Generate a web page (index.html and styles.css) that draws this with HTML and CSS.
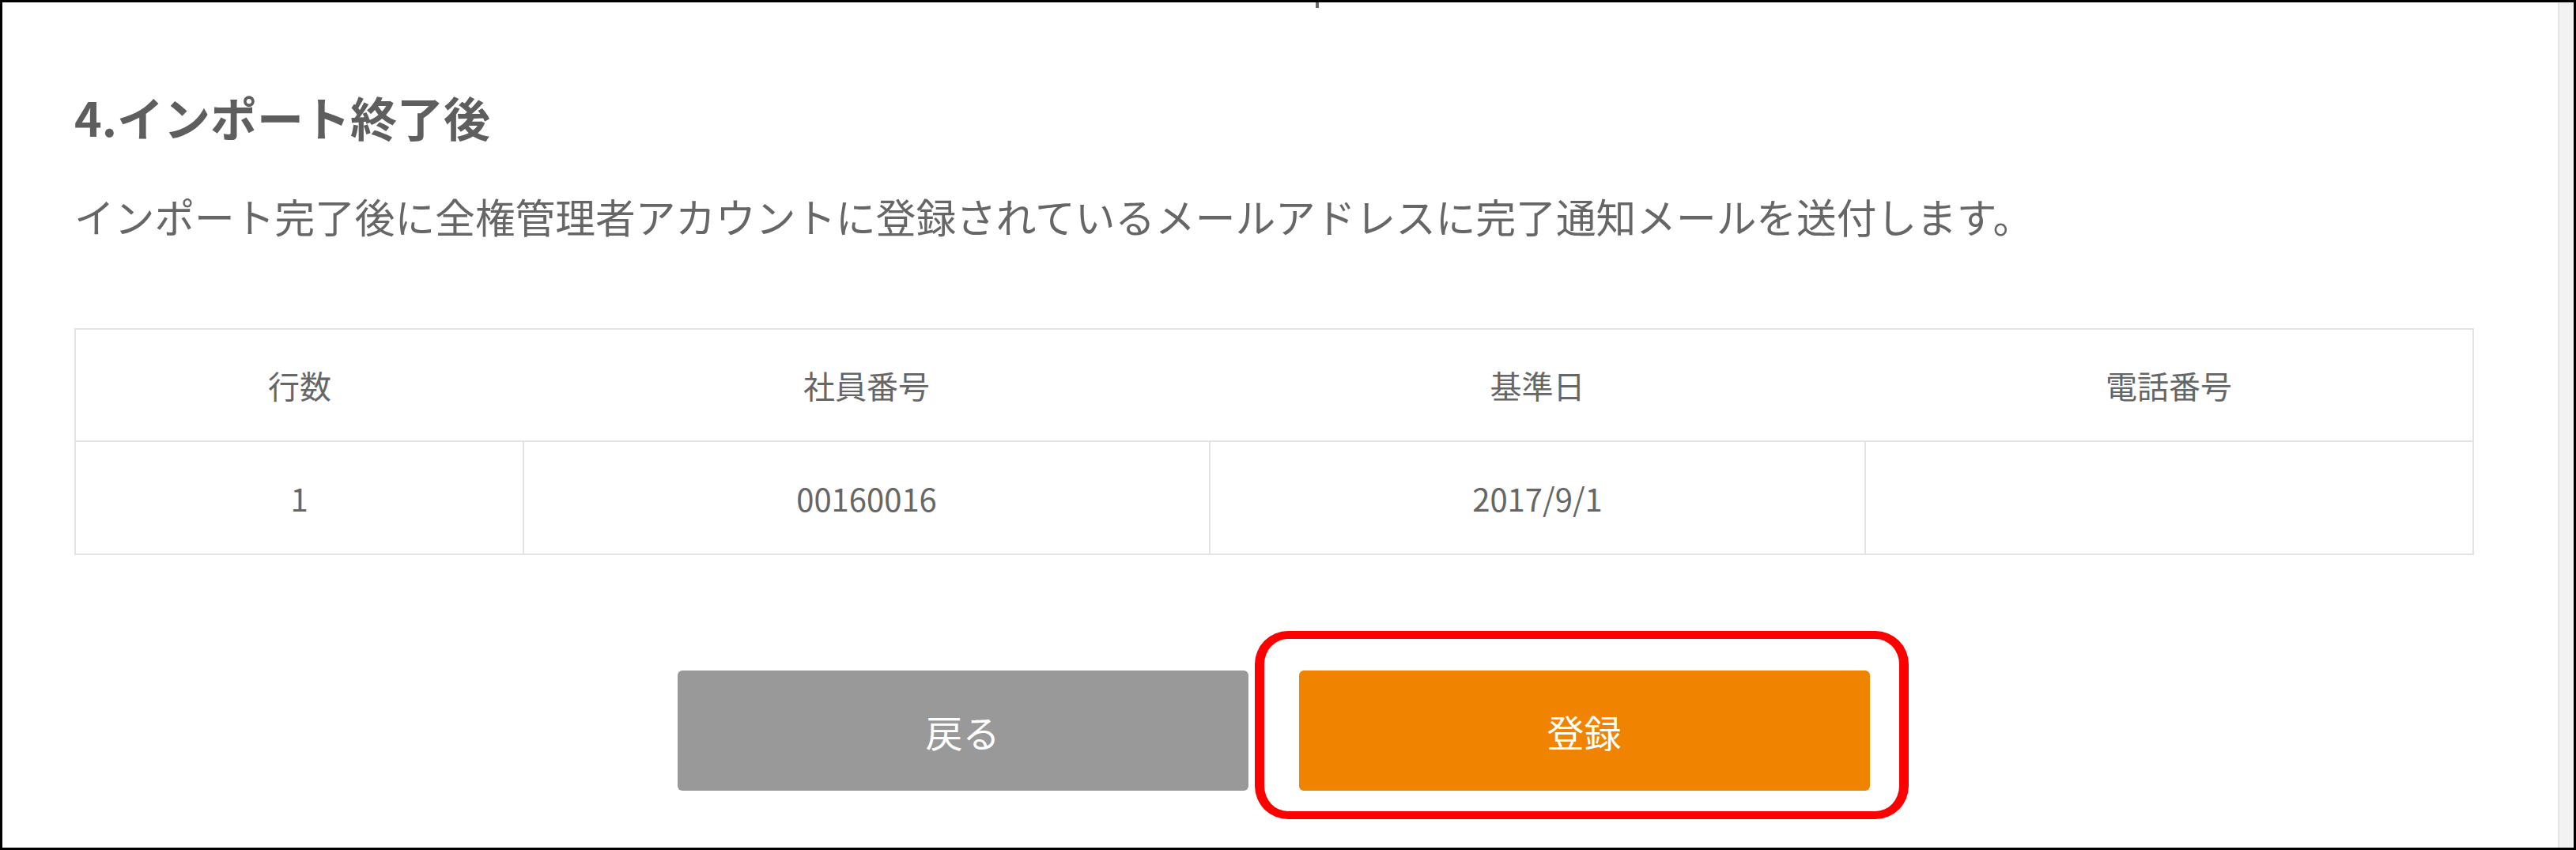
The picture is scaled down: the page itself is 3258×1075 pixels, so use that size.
FILE: index.html
```html
<!DOCTYPE html>
<html lang="ja">
<head>
<meta charset="utf-8">
<title>インポート終了後</title>
<link rel="stylesheet" href="styles.css">
</head>
<body>
<div class="frame">
  <span class="tick"></span>
  <main class="content">
    <h2 class="heading">4.インポート終了後</h2>
    <p class="lead">インポート完了後に全権管理者アカウントに登録されているメールアドレスに完了通知メールを送付します。</p>
    <table class="data">
      <colgroup>
        <col class="c1"><col class="c2"><col class="c3"><col class="c4">
      </colgroup>
      <thead>
        <tr><th>行数</th><th>社員番号</th><th>基準日</th><th>電話番号</th></tr>
      </thead>
      <tbody>
        <tr><td>1</td><td>00160016</td><td>2017/9/1</td><td></td></tr>
      </tbody>
    </table>
    <div class="actions">
      <button class="btn btn-back" type="button">戻る</button>
      <div class="highlight-wrap">
        <button class="btn btn-submit" type="button">登録</button>
        <span class="highlight"></span>
      </div>
    </div>
  </main>
  <div class="scrollbar"></div>
</div>
</body>
</html>
```

FILE: styles.css
```css
html, body {
  margin: 0;
  padding: 0;
  background: #ffffff;
}

.frame {
  position: relative;
  width: 3258px;
  height: 1075px;
  box-sizing: border-box;
  border: 3px solid #000000;
  display: flex;
  overflow: hidden;
  background: #ffffff;
  font-family: "Noto Sans CJK JP", "Noto Sans", sans-serif;
  color: #666666;
}

.tick {
  position: absolute;
  left: 1661px;
  top: 0;
  width: 4px;
  height: 7px;
  background: #6a6a6a;
}

.content {
  flex: 1;
  padding: 110px 108px 0 91px;
  min-width: 0;
}

.heading {
  margin: 0;
  font-size: 59px;
  line-height: 70px;
  font-weight: 700;
  color: #5e5e5e;
}

.lead {
  margin: 55px 0 0;
  font-size: 50.7px;
  line-height: 70px;
  font-weight: 400;
  color: #666666;
  white-space: nowrap;
}

.data {
  margin-top: 107px;
  width: 3033px;
  border-collapse: collapse;
  table-layout: fixed;
  border: 2px solid #e3e3e3;
  font-size: 40px;
  color: #666666;
}

.c1 { width: 567px; }
.c2 { width: 868px; }
.c3 { width: 829px; }
.c4 { width: 769px; }

.data th {
  height: 140px;
  padding: 0;
  font-weight: 400;
  text-align: center;
  vertical-align: middle;
  border-bottom: 2px solid #e3e3e3;
}

.data td {
  height: 141px;
  padding: 0;
  text-align: center;
  vertical-align: middle;
  border: 2px solid #e3e3e3;
}

.actions {
  margin-top: 146px;
  display: flex;
  justify-content: center;
  gap: 64px;
}

.btn {
  width: 722px;
  height: 152px;
  border: none;
  border-radius: 6px;
  color: #ffffff;
  font-family: "Noto Sans CJK JP", "Noto Sans", sans-serif;
  font-size: 47px;
  padding: 0;
  cursor: pointer;
}

.btn-back {
  background: #999999;
}

.btn-submit {
  background: #f08300;
  display: block;
}

.highlight-wrap {
  position: relative;
}

.highlight {
  position: absolute;
  left: -56px;
  right: -49px;
  top: -50px;
  bottom: -36px;
  border: 11px solid #ff0000;
  border-width: 10px 12px;
  border-radius: 42px;
  pointer-events: none;
}

.scrollbar {
  width: 18px;
  flex: none;
  background: #f2f2f2;
  border-left: 2px solid #e6e6e6;
}
```
